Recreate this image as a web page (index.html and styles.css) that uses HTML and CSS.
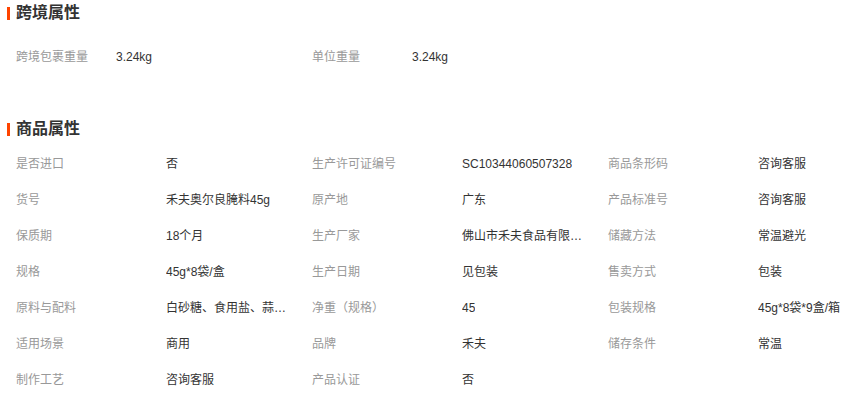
FILE: index.html
```html
<!DOCTYPE html>
<html lang="zh">
<head>
<meta charset="utf-8">
<link rel="stylesheet" href="styles.css">
</head>
<body>
<div class="page">
  <section class="block">
    <h2 class="title">跨境属性</h2>
    <ul class="attrs attrs-cross">
      <li class="item"><span class="label">跨境包裹重量</span><span class="value">3.24kg</span></li>
      <li class="item"><span class="label">单位重量</span><span class="value">3.24kg</span></li>
    </ul>
  </section>
  <section class="block block-goods">
    <h2 class="title">商品属性</h2>
    <ul class="attrs attrs-goods">
      <li class="item"><span class="label">是否进口</span><span class="value">否</span></li>
      <li class="item"><span class="label">生产许可证编号</span><span class="value">SC10344060507328</span></li>
      <li class="item"><span class="label">商品条形码</span><span class="value">咨询客服</span></li>
      <li class="item"><span class="label">货号</span><span class="value">禾夫奥尔良腌料45g</span></li>
      <li class="item"><span class="label">原产地</span><span class="value">广东</span></li>
      <li class="item"><span class="label">产品标准号</span><span class="value">咨询客服</span></li>
      <li class="item"><span class="label">保质期</span><span class="value">18个月</span></li>
      <li class="item"><span class="label">生产厂家</span><span class="value">佛山市禾夫食品有限公司</span></li>
      <li class="item"><span class="label">储藏方法</span><span class="value">常温避光</span></li>
      <li class="item"><span class="label">规格</span><span class="value">45g*8袋/盒</span></li>
      <li class="item"><span class="label">生产日期</span><span class="value">见包装</span></li>
      <li class="item"><span class="label">售卖方式</span><span class="value">包装</span></li>
      <li class="item"><span class="label">原料与配料</span><span class="value">白砂糖、食用盐、蒜粉、香辛料</span></li>
      <li class="item"><span class="label">净重（规格）</span><span class="value">45</span></li>
      <li class="item"><span class="label">包装规格</span><span class="value wide">45g*8袋*9盒/箱</span></li>
      <li class="item"><span class="label">适用场景</span><span class="value">商用</span></li>
      <li class="item"><span class="label">品牌</span><span class="value">禾夫</span></li>
      <li class="item"><span class="label">储存条件</span><span class="value">常温</span></li>
      <li class="item"><span class="label">制作工艺</span><span class="value">咨询客服</span></li>
      <li class="item"><span class="label">产品认证</span><span class="value">否</span></li>
    </ul>
  </section>
</div>
</body>
</html>
```
FILE: styles.css
```css
html, body {
  margin: 0;
  padding: 0;
  background: #fff;
}
body {
  font-family: "Liberation Sans", "Noto Sans CJK SC", sans-serif;
  font-size: 12px;
  color: #333;
}
.page {
  padding: 0 0 0 7px;
}
.title {
  margin: 0;
  height: 26px;
  line-height: 26px;
  font-size: 16px;
  font-weight: bold;
  color: #333;
  display: flex;
  align-items: center;
  gap: 6px;
}
.title::before {
  content: "";
  width: 3px;
  height: 13px;
  background: #ff4400;
}
.attrs {
  list-style: none;
  margin: 0;
  padding: 0 0 0 9px;
  display: grid;
}
.attrs-cross {
  padding-top: 13px;
  grid-template-columns: repeat(2, 296px);
}
.attrs-cross .label {
  width: 100px;
}
.block-goods {
  margin-top: 41px;
}
.attrs-goods {
  padding-top: 4px;
  grid-template-columns: repeat(3, 296px);
}
.item {
  display: flex;
  height: 36px;
  line-height: 36px;
  white-space: nowrap;
}
.label {
  width: 150px;
  flex: none;
  color: #999;
}
.value {
  max-width: 122px;
  overflow: hidden;
  text-overflow: ellipsis;
  color: #333;
}
.value.wide {
  max-width: 140px;
}
```
